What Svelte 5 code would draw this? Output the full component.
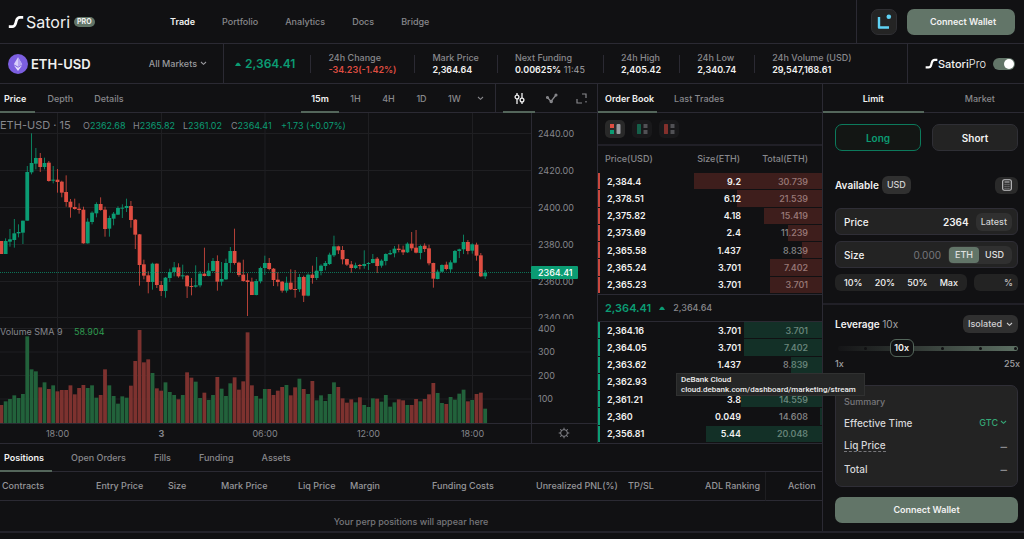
<script>
  const nav = ['Trade', 'Portfolio', 'Analytics', 'Docs', 'Bridge'];
  const stats = [
    { label: '24h Change', value: '-34.23(-1.42%)', down: true },
    { label: 'Mark Price', value: '2,364.64' },
    { label: 'Next Funding', value: '0.00625%', extra: '11:45' },
    { label: '24h High', value: '2,405.42' },
    { label: '24h Low', value: '2,340.74' },
    { label: '24h Volume (USD)', value: '29,547,168.61' }
  ];
  const intervals = ['15m', '1H', '4H', '1D', '1W'];
  const asks = [
    ['2,384.4', '9.2', '30.739', 57],
    ['2,378.51', '6.12', '21.539', 38],
    ['2,375.82', '4.18', '15.419', 26],
    ['2,373.69', '2.4', '11.239', 15],
    ['2,365.58', '1.437', '8.839', 9],
    ['2,365.24', '3.701', '7.402', 23],
    ['2,365.23', '3.701', '3.701', 23]
  ];
  const bids = [
    ['2,364.16', '3.701', '3.701', 35],
    ['2,364.05', '3.701', '7.402', 35],
    ['2,363.62', '1.437', '8.839', 14],
    ['2,362.93', '', '', 18],
    ['2,361.21', '3.8', '14.559', 36],
    ['2,360', '0.049', '14.608', 1],
    ['2,356.81', '5.44', '20.048', 52]
  ];
  const positionTabs = ['Positions', 'Open Orders', 'Fills', 'Funding', 'Assets'];
  const columns = ['Contracts', 'Entry Price', 'Size', 'Mark Price', 'Liq Price', 'Margin', 'Funding Costs', 'Unrealized PNL(%)', 'TP/SL', 'ADL Ranking', 'Action'];

  // direction, body top, body bottom, wick top, wick bottom (chart thirds), volume top
  const candles = `r 393 432 393 432 270|g 393 432 385 432 259|g 388 395 357 410 252|g 370 390 327 413 241|g 366 370 343 382 249|g 332 368 332 402 237|g 186 332 168 332 64|g 159 187 70 193 163|g 144 161 114 178 169|r 144 171 129 186 217|g 159 171 143 178 202|r 158 213 153 215 222|g 209 212 168 220 211|r 209 216 177 248 229|r 215 248 212 262 225|r 246 276 196 290 225|r 275 292 267 323 211|r 291 297 266 299 238|r 296 300 280 311 219|r 299 400 290 401 210|g 335 400 325 401 219|g 308 336 304 343 211|g 282 310 277 322 248|r 282 300 262 302 240|r 299 357 290 380 163|g 324 356 317 380 211|g 311 326 306 346 243|g 294 314 289 315 266|g 293 296 283 324 244|g 288 294 266 306 248|r 288 330 273 353 212|r 329 374 327 417 138|r 373 465 372 527 45|r 463 497 449 508 142|r 496 516 484 550 133|g 461 516 458 539 174|r 461 525 460 534 220|r 525 543 513 558 227|g 503 543 501 563 202|g 486 504 476 516 231|g 472 486 456 499 240|r 472 499 460 503 253|g 496 499 464 508 240|r 497 529 495 564 172|r 528 531 504 556 188|g 526 530 466 533 200|g 491 526 483 532 249|r 491 498 413 499 233|g 482 498 459 499 255|g 453 483 444 485 240|r 453 515 436 542 186|g 507 515 456 527 221|g 459 508 446 510 243|g 423 459 411 486 205|r 423 459 356 464 187|r 458 495 455 500 224|r 494 513 449 515 199|r 511 516 490 618 52|r 515 555 503 555 211|g 513 555 507 556 243|g 474 514 470 520 251|g 459 474 437 495 222|r 459 477 444 481 222|r 476 510 474 528 240|r 509 516 487 529 227|r 515 542 513 548 216|g 518 542 500 548 210|r 518 538 478 540 241|r 537 540 480 563 217|g 501 538 492 546 191|r 501 557 497 576 222|g 494 557 490 559 237|r 494 504 467 521 198|g 482 504 441 510 256|g 467 483 463 496 241|g 459 468 453 481 258|g 434 462 428 465 237|g 409 436 377 441 202|r 409 421 407 432 216|r 420 448 408 463 250|r 447 464 446 468 263|r 463 474 453 488 253|g 466 474 458 477 262|r 465 468 462 478 247|g 462 468 421 476 270|g 459 462 456 480 276|g 447 459 432 460 250|r 446 468 441 489 251|g 452 467 448 473 260|g 432 453 430 466 240|g 429 433 420 435 275|g 416 430 408 442 262|r 416 420 403 427 253|r 419 427 407 435 256|g 401 427 397 429 270|r 401 415 366 422 270|r 413 428 360 430 252|g 408 429 404 448 259|r 407 417 400 426 252|r 415 460 404 466 238|r 459 506 458 533 204|g 485 507 479 508 234|g 465 485 463 487 264|r 464 477 455 481 267|g 457 478 451 488 246|g 423 458 420 460 254|g 418 423 416 444 236|g 396 418 374 432 224|r 396 423 390 433 259|g 403 422 400 431 255|r 404 437 398 452 237|r 436 499 429 501 233|g 489 499 480 507 281`
    .split('|')
    .map((row, i) => {
      const [dir, top, bottom, high, low, vol] = row.split(' ');
      const y = (v) => Number(v) / 3 - 3;
      return {
        x: 1.33 + 4.32 * i,
        up: dir === 'g',
        top: y(top),
        h: (bottom - top) / 3,
        high: y(high),
        wick: (low - high) / 3,
        volTop: 202 + vol / 3,
        volH: (324 - vol) / 3
      };
    });

  const priceLines = [[20.5, '2440.00'], [57.5, '2420.00'], [94.5, '2400.00'], [131.5, '2380.00'], [168.5, '2360.00'], [204.5, '2340.00']];
  const volumeLines = [[215.5, '400'], [239, '300'], [262.5, '200'], [286, '100']];
  const times = [[57.5, '18:00'], [161.5, '3'], [265, '06:00'], [368.5, '12:00'], [472.5, '18:00']];

  let leverage = $state(10);
  let pro = $state(true);
  let price = $state('2364');
  let size = $state('');
  let percent = $state('');
  let unit = $state('ETH');
</script>

{#snippet mark(w)}
  <svg width={w} viewBox="0 0 16 14" aria-hidden="true"><path d="M.8 11.6h3.400c2.500 0 3-1.200 3.600-3.700l.5-2C9 3.300 10 2.400 12 2.400h3.200" fill="none" stroke="#fff" stroke-width="2.700" /></svg>
{/snippet}
{#snippet chevron()}
  <svg class="chev" width="7" height="5" viewBox="0 0 7 5" aria-hidden="true"><path d="M1 1l2.500 2.300L6 1" fill="none" stroke="currentColor" stroke-width="1.100" /></svg>
{/snippet}
{#snippet rows(list, side)}
  <table class="book {side}">
    <tbody>
      {#each list as [p, s, t, w]}
        <tr>
          <td class="p">{p}</td>
          <td class="s">{s}</td>
          <td class="t">{t}<i style="width:{w}cqw"></i></td>
        </tr>
      {/each}
    </tbody>
  </table>
{/snippet}

<div class="page">
  <header>
    <a class="logo" href="#home">{@render mark(16)}<span>Satori</span><b>PRO</b></a>
    <nav>
      {#each nav as item, i}<a href="#{item}" class:on={i === 0}>{item}</a>{/each}
    </nav>
    <div class="account">
      <button class="net" aria-label="Network">
        <svg width="16" height="16" viewBox="0 0 16 16"><path d="M3 3v10.500h10" fill="none" stroke="#5fd3f5" stroke-width="2.400" stroke-linejoin="round" /><circle cx="12.800" cy="2.800" r="2.300" fill="#5fd3f5" /></svg>
      </button>
      <button class="primary">Connect Wallet</button>
    </div>
  </header>

  <section class="market">
    <div class="pair">
      <svg width="20" height="20" viewBox="0 0 20 20"><circle cx="10" cy="10" r="10" fill="#7c5fe0" /><path d="M10 3.300l4.200 7L10 12.700l-4.200-2.400z" fill="#d8cffb" /><path d="M10 3.300v9.400l4.200-2.400z" fill="#b5a4f2" /><path d="M5.800 11.300l4.200 2.400 4.200-2.400L10 17z" fill="#e6e0fc" /></svg>
      <h1>ETH-USD</h1>
      <button class="plain">All Markets {@render chevron()}</button>
    </div>
    <div class="last"><svg width="6" height="4" viewBox="0 0 6 4"><path d="M0 4Q3-3 6 4z" fill="#0b9c73" /></svg>2,364.41</div>
    <dl>
      {#each stats as s}
        <div><dt>{s.label}</dt><dd class:down={s.down}>{s.value}{#if s.extra}<span>&nbsp;{s.extra}</span>{/if}</dd></div>
      {/each}
    </dl>
    <label class="pro">{@render mark(13)}<span>Satori<em>Pro</em></span><input type="checkbox" bind:checked={pro} /></label>
  </section>

  <div class="body">
    <main>
      <div class="top">
        <section class="chart">
          <div class="bar">
            <div class="tabs">
              <button class="on">Price</button><button>Depth</button><button>Details</button>
            </div>
            <div class="intervals">
              {#each intervals as t, i}<button class:on={i === 0}>{t}</button>{/each}
              <button aria-label="More intervals">{@render chevron()}</button>
            </div>
            <div class="tools">
              <button class="on" aria-label="Indicators"><svg width="11" height="11" viewBox="0 0 11 11" fill="none" stroke="currentColor" stroke-width="1.300"><path d="M3 0v2M3 6v5M8 0v5M8 9v2" /><circle cx="3" cy="4" r="1.900" /><circle cx="8" cy="7" r="1.900" /></svg></button>
              <button aria-label="Line style"><svg width="12" height="11" viewBox="0 0 12 11" fill="none" stroke="currentColor" stroke-width="1.300"><path d="M1.500 4.500l3.500 4 5-6.500" /><circle cx="1.500" cy="4.500" r=".9" /><circle cx="5.200" cy="8.600" r="1.100" /><circle cx="10" cy="2" r=".9" /></svg></button>
              <button aria-label="Full screen"><svg width="11" height="11" viewBox="0 0 11 11" fill="none" stroke="currentColor" stroke-width="1.200"><path d="M6 1h4v4M10 8v1.500M1 6v4h5" /></svg></button>
            </div>
          </div>
          <svg class="plot" viewBox="0 0 597 330">
            {#each priceLines as [y]}<path class="grid" d="M0 {y}H531" />{/each}
            {#each volumeLines as [y]}<path class="grid" d="M0 {y}H531" />{/each}
            {#each times as [x]}<path class="grid" d="M{x} 0V310" />{/each}
            {#each candles as c}
              <g fill={c.up ? '#0b9c73' : '#df4d41'}>
                <rect x={c.x - 0.4} y={c.high} width="0.8" height={c.wick} />
                <rect x={c.x - 1.9} y={c.top} width="3.8" height={c.h} />
              </g>
              <rect x={c.x - 1.9} y={c.volTop} width="3.8" height={c.volH} fill={c.up ? '#22623b' : '#7d322f'} />
            {/each}
            <path d="M0 159.500H531" stroke="#0b9c73" stroke-dasharray="1 1" opacity=".7" />
            <path class="edge" d="M531.500 0V330M0 310.500H597" />
            <g class="lab">
              {#each priceLines as [y, t]}<text x="538" y={y + 3}>{t}</text>{/each}
              <rect x="532" y="206" width="64" height="5" fill="#111113" />
              {#each volumeLines as [y, t]}<text x="538" y={y + 3}>{t}</text>{/each}
              {#each times as [x, t]}<text {x} y="324" text-anchor="middle" class:day={t === '3'}>{t}</text>{/each}
            </g>
            <rect x="531" y="153" width="47" height="13" rx="1" fill="#0b9c73" />
            <text x="538" y="163" class="now">2364.41</text>
            <text x="0" y="16" class="title">ETH-USD · 15</text>
            <g class="ohlc">
              <text x="83" y="16"><tspan class="k">O</tspan>2362.68</text>
              <text x="133" y="16"><tspan class="k">H</tspan>2365.82</text>
              <text x="183" y="16"><tspan class="k">L</tspan>2361.02</text>
              <text x="231" y="16"><tspan class="k">C</tspan>2364.41</text>
              <text x="281" y="16">+1.73 (+0.07%)</text>
            </g>
            <text x="0" y="222" class="vol">Volume SMA 9</text>
            <text x="74" y="222" class="vol up">58.904</text>
            <g transform="translate(564 320)" fill="none" stroke="#85868c"><circle r="3.400" />{#each [0, 45, 90, 135, 180, 225, 270, 315] as a}<path d="M0-3.400V-5.300" transform="rotate({a})" />{/each}</g>
          </svg>
        </section>

        <section class="orders">
          <div class="tabs"><button class="on">Order Book</button><button>Last Trades</button></div>
          <div class="modes">
            <button class="on" aria-label="Bids and asks"><svg width="11" height="10" viewBox="0 0 11 10"><path d="M0 0h4v4H0z" fill="#df4d41" /><path d="M0 6h4v4H0z" fill="#0b9c73" /><rect x="6.500" width="4" height="10" rx="1" fill="#9a9a9f" /></svg></button>
            <button aria-label="Bids"><svg width="11" height="10" viewBox="0 0 11 10"><rect width="4" height="10" rx=".5" fill="#155f49" /><path d="M6.500 0h4v4h-4zM6.500 6h4v4h-4z" fill="#515155" /></svg></button>
            <button aria-label="Asks"><svg width="11" height="10" viewBox="0 0 11 10"><rect width="4" height="10" rx=".5" fill="#83302c" /><path d="M6.500 0h4v4h-4zM6.500 6h4v4h-4z" fill="#515155" /></svg></button>
          </div>
          <div class="heads"><span>Price(USD)</span><span>Size(ETH)</span><span>Total(ETH)</span></div>
          {@render rows(asks, 'ask')}
          <div class="mid"><b>2,364.41</b><svg width="6" height="4" viewBox="0 0 6 4"><path d="M0 4Q3-3 6 4z" fill="#0b9c73" /></svg><span>2,364.64</span></div>
          {@render rows(bids, 'bid')}
        </section>
      </div>

      <section class="positions">
        <div class="tabs">
          {#each positionTabs as t, i}<button class:on={i === 0}>{t}</button>{/each}
        </div>
        <table>
          <thead><tr>{#each columns as c}<th>{c}</th>{/each}</tr></thead>
          <tbody><tr><td colspan="11">Your perp positions will appear here</td></tr></tbody>
        </table>
      </section>
    </main>

    <aside>
      <div class="tabs"><button class="on">Limit</button><button>Market</button></div>
      <form onsubmit={(e) => e.preventDefault()}>
        <div class="sides"><button class="long">Long</button><button>Short</button></div>
        <div class="avail"><b>Available</b><span class="chip">USD</span>
          <button class="calc" aria-label="Calculator"><svg width="10" height="12" viewBox="0 0 10 12"><rect x=".7" y=".7" width="8.600" height="10.600" rx="1.600" fill="none" stroke="#c8c8ca" stroke-width="1.100" /><path d="M2.500 3h5" stroke="#c8c8ca" /><path d="M2.500 5.300h5M2.500 7.300h5M2.500 9.300h5" stroke="#8f8f92" stroke-dasharray="1.200 .7" /></svg></button>
        </div>
        <div class="field"><label for="price">Price</label><input id="price" bind:value={price} /><button class="chip">Latest</button></div>
        <div class="field"><label for="size">Size</label><input id="size" class="dim" placeholder="0.000" bind:value={size} />
          <div class="units">{#each ['ETH', 'USD'] as u}<button class:on={unit === u} onclick={() => (unit = u)}>{u}</button>{/each}</div>
        </div>
        <div class="quick">
          <div>{#each ['10%', '20%', '50%', 'Max'] as q}<button>{q}</button>{/each}</div>
          <label><input aria-label="Percent of balance" bind:value={percent} />%</label>
        </div>
        <div class="lev">
          <label for="lev">Leverage <span>{leverage}x</span></label>
          <button class="chip">Isolated {@render chevron()}</button>
        </div>
        <div class="slider">
          <div class="track"></div>
          {#each [17, 59, 80, 99] as d}<i style="left:{d}%"></i>{/each}
          <output for="lev" style="left:{((leverage - 1) / 24) * 100}%">{leverage}x</output>
          <input id="lev" type="range" min="1" max="25" bind:value={leverage} />
        </div>
        <div class="ends"><span>1x</span><span>25x</span></div>
        <div class="summary">
          <h2>Summary</h2>
          <p><span>Effective Time</span><button class="plain gtc">GTC {@render chevron()}</button></p>
          <p><span class="hint">Liq Price</span><span class="dash">–</span></p>
          <p><span>Total</span><span class="dash">–</span></p>
        </div>
        <button class="primary wide">Connect Wallet</button>
      </form>
    </aside>
  </div>
  <div class="tip" role="tooltip">DeBank Cloud<br />cloud.debank.com/dashboard/marketing/stream</div>
</div>

<style>
  :global(body) { background: #111113; }
  * { box-sizing: border-box; }
  .page { position: relative; overflow: hidden; font: 500 9px/12px Inter, 'Liberation Sans', sans-serif; color: #f1f1f1; --line: #2b2a33; --dim: #88888c; --green: #0b9c73; --sage: #627568; --panel: #232323; --chip: #303030; }
  button, input { font: inherit; color: inherit; border: 0; padding: 0; margin: 0; background: none; }
  button { cursor: pointer; white-space: nowrap; }
  a { color: inherit; text-decoration: none; }
  h1, h2, p, dl, dd { margin: 0; font: inherit; }
  svg { display: block; flex: none; }

  header { display: flex; align-items: center; height: 44px; border-bottom: 1px solid var(--line); }
  .logo { display: flex; align-items: center; padding-left: 8px; width: 170px; font-size: 16px; line-height: 20px; }
  .logo span { margin: 0 4px 0 2px; font-weight: 400; }
  .logo b { background: var(--sage); border-radius: 5px; font-size: 7px; line-height: 10px; padding: 0 3px; }
  nav { display: flex; gap: 27px; flex: 1; color: var(--dim); }
  .on { color: #f1f1f1; font-weight: 600; }
  .account { display: flex; gap: 10px; align-items: center; align-self: stretch; border-left: 1px solid var(--line); padding: 0 9px 0 14px; }
  .net { width: 26px; height: 26px; border-radius: 7px; background: #242424; border: 1px solid #2f2f33; display: grid; place-items: center; }
  .primary { width: 108px; height: 26px; border-radius: 7px; background: var(--sage); font-weight: 600; text-align: center; padding-left: 4px; }
  .primary.wide { width: 100%; padding: 0; font-size: 9px; }

  .market { display: flex; height: 40px; border-bottom: 1px solid var(--line); align-items: center; }
  .pair { display: flex; align-items: center; align-self: stretch; width: 224px; padding: 0 16px 0 8px; border-right: 1px solid var(--line); }
  .pair h1 { font-size: 13px; line-height: 18px; font-weight: 600; margin: 0 auto 0 3px; }
  .plain { display: flex; align-items: center; gap: 3px; color: #9a9a9e; }
  .last { display: flex; align-items: center; gap: 4px; padding: 0 15px 0 11px; color: var(--green); font-size: 12px; line-height: 16px; font-weight: 600; }
  .market dl { display: flex; flex: 1; align-items: center; }
  .market dl div { position: relative; padding: 0 18px 0 17px; border-left: 1px solid transparent; border-image: linear-gradient(transparent 4px, var(--line) 4px, var(--line) 20px, transparent 20px) 1; white-space: nowrap; }
  dt { color: var(--dim); }
  dd { font-weight: 600; }
  dd.down { color: #df4d41; }
  dd span { color: #a0a0a4; font-weight: 400; }
  .pro { display: flex; align-items: center; align-self: stretch; border-left: 1px solid var(--line); padding: 0 9px 0 17px; font-size: 11px; }
  .pro em { font-style: normal; font-weight: 300; }
  .pro span { margin-right: 7px; }
  .pro input { appearance: none; width: 22px; height: 12px; border-radius: 6px; background: var(--sage); display: flex; justify-content: flex-end; padding: 1px; }
  .pro input::before { content: ''; width: 10px; height: 10px; border-radius: 5px; background: #fff; }
  .pro input:not(:checked) { justify-content: flex-start; background: #444; }

  .body { display: grid; grid-template-columns: minmax(0, 1fr) 201px; border-bottom: 2px solid #24232b; }
  .top { display: grid; grid-template-columns: minmax(0, 1fr) 226px; border-bottom: 1px solid var(--line); }
  .bar, .tabs { display: flex; height: 29px; }
  .bar, .orders > .tabs, .positions > .tabs, aside > .tabs { border-bottom: 1px solid var(--line); }
  .tabs button, .intervals button, .tools button { color: var(--dim); height: 29px; border-bottom: 2px solid transparent; padding-top: 2px; }
  .tabs button.on, .intervals button.on, .tools button.on { color: #f1f1f1; border-color: #54665b; }
  .bar .tabs { flex: 1; }
  .bar .tabs button { padding-left: 11px; padding-right: 10px; }
  .bar .tabs button:first-child { padding-left: 4px; padding-right: 9px; margin-right: 1px; }
  .intervals { display: flex; padding-right: 6px; border-right: 1px solid var(--line); }
  .intervals button { width: 33px; }
  .intervals button:first-child { width: 38px; }
  .intervals button:last-child { width: 18px; display: grid; place-items: center; }
  .tools { display: flex; gap: 1px; padding: 0 4px 0 7px; }
  .tools button { width: 32px; display: grid; place-items: center; }
  .tools button:last-child { width: 24px; }

  .plot { width: 100%; }
  .plot text { font-family: Inter, sans-serif; font-size: 9px; font-weight: 400; fill: #85868c; }
  .plot .grid { stroke: #1f1f22; }
  .plot .edge { stroke: var(--line); fill: none; }
  .plot .title { font-size: 11px; }
  .plot .ohlc text { fill: var(--green); }
  .plot .ohlc .k { fill: #85868c; }
  .plot .vol.up { fill: #2f9a50; }
  .plot .now { fill: #fff; font-weight: 500; }
  .plot .day { font-weight: 700; }

  .orders { border-left: 1px solid var(--line); border-right: 1px solid var(--line); container-type: inline-size; }
  .orders > .tabs button { padding: 2px 3px 0 7px; }
  .orders > .tabs button + button { margin-left: 10px; }
  .modes { display: flex; gap: 7px; padding: 7px 7px 0; height: 33px; border-bottom: 2px solid #212027; }
  .modes button { width: 20px; height: 18px; border-radius: 5px; background: #19191b; display: grid; place-items: center; }
  .modes .on { background: #292929; }
  .heads { display: flex; height: 27px; align-items: center; padding: 0 14px 2px 7px; color: var(--dim); }
  .heads span:nth-child(2) { margin: 0 22px 0 auto; }
  .book { width: 100%; height: 121px; border-spacing: 0; table-layout: fixed; font-weight: 600; }
  .book tr { position: relative; }
  .book td { position: relative; padding: 0; height: 17px; }
  .book .p { width: 70px; padding-left: 9px; }
  .book .p::before { content: ''; position: absolute; left: 0; top: 0; bottom: 1px; width: 2px; background: #c9483e; }
  .book.bid .p::before { background: var(--green); }
  .book .s { text-align: right; width: 73px; z-index: 1; position: relative; }
  .book .t { text-align: right; padding-right: 14px; color: #ffffff80; font-weight: 500; }
  .book i { position: absolute; right: 0; top: 0; bottom: 1px; background: #df4d4138; }
  .book.bid i { background: #1d8f6540; }
  .mid { display: flex; align-items: center; gap: 8px; height: 28px; border: solid var(--line); border-width: 1px 0; padding-left: 7px; color: var(--dim); }
  .mid b { color: var(--green); font-size: 11px; font-weight: 600; }

  .positions { border-right: 1px solid var(--line); }
  .positions .tabs button { height: 28px; padding: 2px 10px 0; }
  .positions .tabs button:first-child { padding: 2px 8px 0 4px; margin-right: 1px; }
  .positions .tabs { gap: 0 8px; height: 28px; }
  .positions table { width: 100%; border-spacing: 0; table-layout: fixed; color: #96969a; }
  th { font-weight: 500; text-align: left; height: 29px; padding: 0 0 0 2px; border-bottom: 1px solid var(--line); width: 94px; white-space: nowrap; }
  th:nth-child(2) { width: 72px; }
  th:nth-child(3) { width: 53px; }
  th:nth-child(4), th:nth-child(9) { width: 77px; }
  th:nth-child(5) { width: 52px; }
  th:nth-child(6) { width: 82px; }
  th:nth-child(7) { width: 104px; }
  th:nth-child(8) { width: 92px; }
  th:nth-child(10) { width: 62px; }
  th:nth-child(11) { width: auto; padding-left: 22px; border-left: 1px solid #1e1e21; }
  .positions td { height: 30px; padding: 15px 0 0; text-align: center; vertical-align: top; color: #77777b; }

  aside > .tabs button { flex: 1 1 0; width: 50%; min-width: 50%; }
  aside > .tabs button + button { padding-left: 12px; }
  form { padding: 11px 6px 8px 12px; font-size: 10px; }
  .sides { display: grid; grid-template-columns: 1fr 1fr; gap: 11px; }
  .sides button { height: 27px; border-radius: 7px; border: 1px solid #2f2f35; background: var(--panel); font-weight: 600; }
  .sides .long { color: var(--green); border-color: #0c7a5c; background: #131614; }
  .avail { display: flex; align-items: center; gap: 3px; height: 18px; margin: 25px 0 14px; font-size: 9px; }
  .avail b { font-size: 10px; font-weight: 600; }
  .chip { background: var(--chip); border-radius: 6px; padding: 0 5px; height: 18px; line-height: 18px; color: #d0d0d2; font-size: 9px; display: flex; align-items: center; gap: 4px; }
  .calc { margin-left: auto; width: 23px; height: 17px; border-radius: 6px; background: #2a2a2a; display: grid; place-items: center; }
  .field { display: flex; align-items: center; height: 27px; border: 1px solid #2f2e36; border-radius: 6px; background: var(--panel); padding: 0 5px 0 8px; margin-bottom: 6px; gap: 7px; }
  .field input { flex: 1; min-width: 0; text-align: right; font-weight: 600; outline: none; }
  .field input.dim { font-weight: 400; }
  .field input::placeholder { color: #77777b; }
  .units { display: flex; background: var(--chip); border-radius: 6px; padding: 1px 2px 1px 1px; font-size: 9px; }
  .units button { height: 16px; border-radius: 4px; padding: 0 6px; color: #e0e0e0; font-weight: 500; }
  .units .on { background: var(--sage); }
  .quick { display: grid; grid-template-columns: 1fr 44px; gap: 7px; height: 17px; font-size: 9px; }
  .quick div, .quick label { display: flex; align-items: center; justify-content: space-between; background: var(--panel); border-radius: 6px; padding: 0 9px; }
  .quick label { padding-right: 5px; color: #c0c0c2; }
  .quick input { width: 20px; outline: none; }
  .lev { display: flex; justify-content: space-between; align-items: center; margin: 12px -6px 0 -12px; padding: 10px 6px 0 12px; border-top: 2px solid #212027; }
  .lev label { font-weight: 600; }
  .lev label span { font-weight: 400; color: #a5a5a8; }
  .slider { position: relative; height: 18px; margin: 6px 0 1px; }
  .track { position: absolute; inset: 7px 0 6px 3px; border-radius: 3px; background: linear-gradient(90deg, #151517, #2c322f 35%, #5d7063); }
  .slider i { position: absolute; top: 8px; width: 3px; height: 3px; margin-left: -2px; border-radius: 2px; background: #111113; }
  .slider output { position: absolute; top: 0; width: 24px; height: 18px; margin-left: -14px; border: 1px solid #54665b; border-radius: 6px; background: #111113; font: 600 9px/16px Inter, sans-serif; text-align: center; }
  .slider input { position: absolute; inset: 0; width: 100%; height: 18px; opacity: 0; }
  .ends { display: flex; justify-content: space-between; margin-right: -2px; font-size: 9px; color: #a0a0a4; }
  .summary { background: var(--panel); border: 1px solid #2f2e36; border-radius: 7px; padding: 10px 10px 6px 8px; margin: 15px 0 10px; }
  .summary h2 { font-size: 9px; line-height: 12px; color: #77777b; margin-bottom: 3px; }
  .summary p { display: flex; justify-content: space-between; align-items: center; height: 23px; color: #d6d6d8; }
  .summary .gtc { color: #35a676; font-size: 9px; gap: 2px; }
  .hint { border-bottom: 1px dashed #77777b; }
  .dash { color: #8a8a8e; font-size: 13px; }

  .tip { position: absolute; z-index: 5; left: 676px; top: 373px; background: #252626; border: 1px solid #303131; padding: 1px 8px 1px 4px; font: 500 8px/10px Roboto, sans-serif; color: #ececec; white-space: nowrap; height: 23px; }
</style>
